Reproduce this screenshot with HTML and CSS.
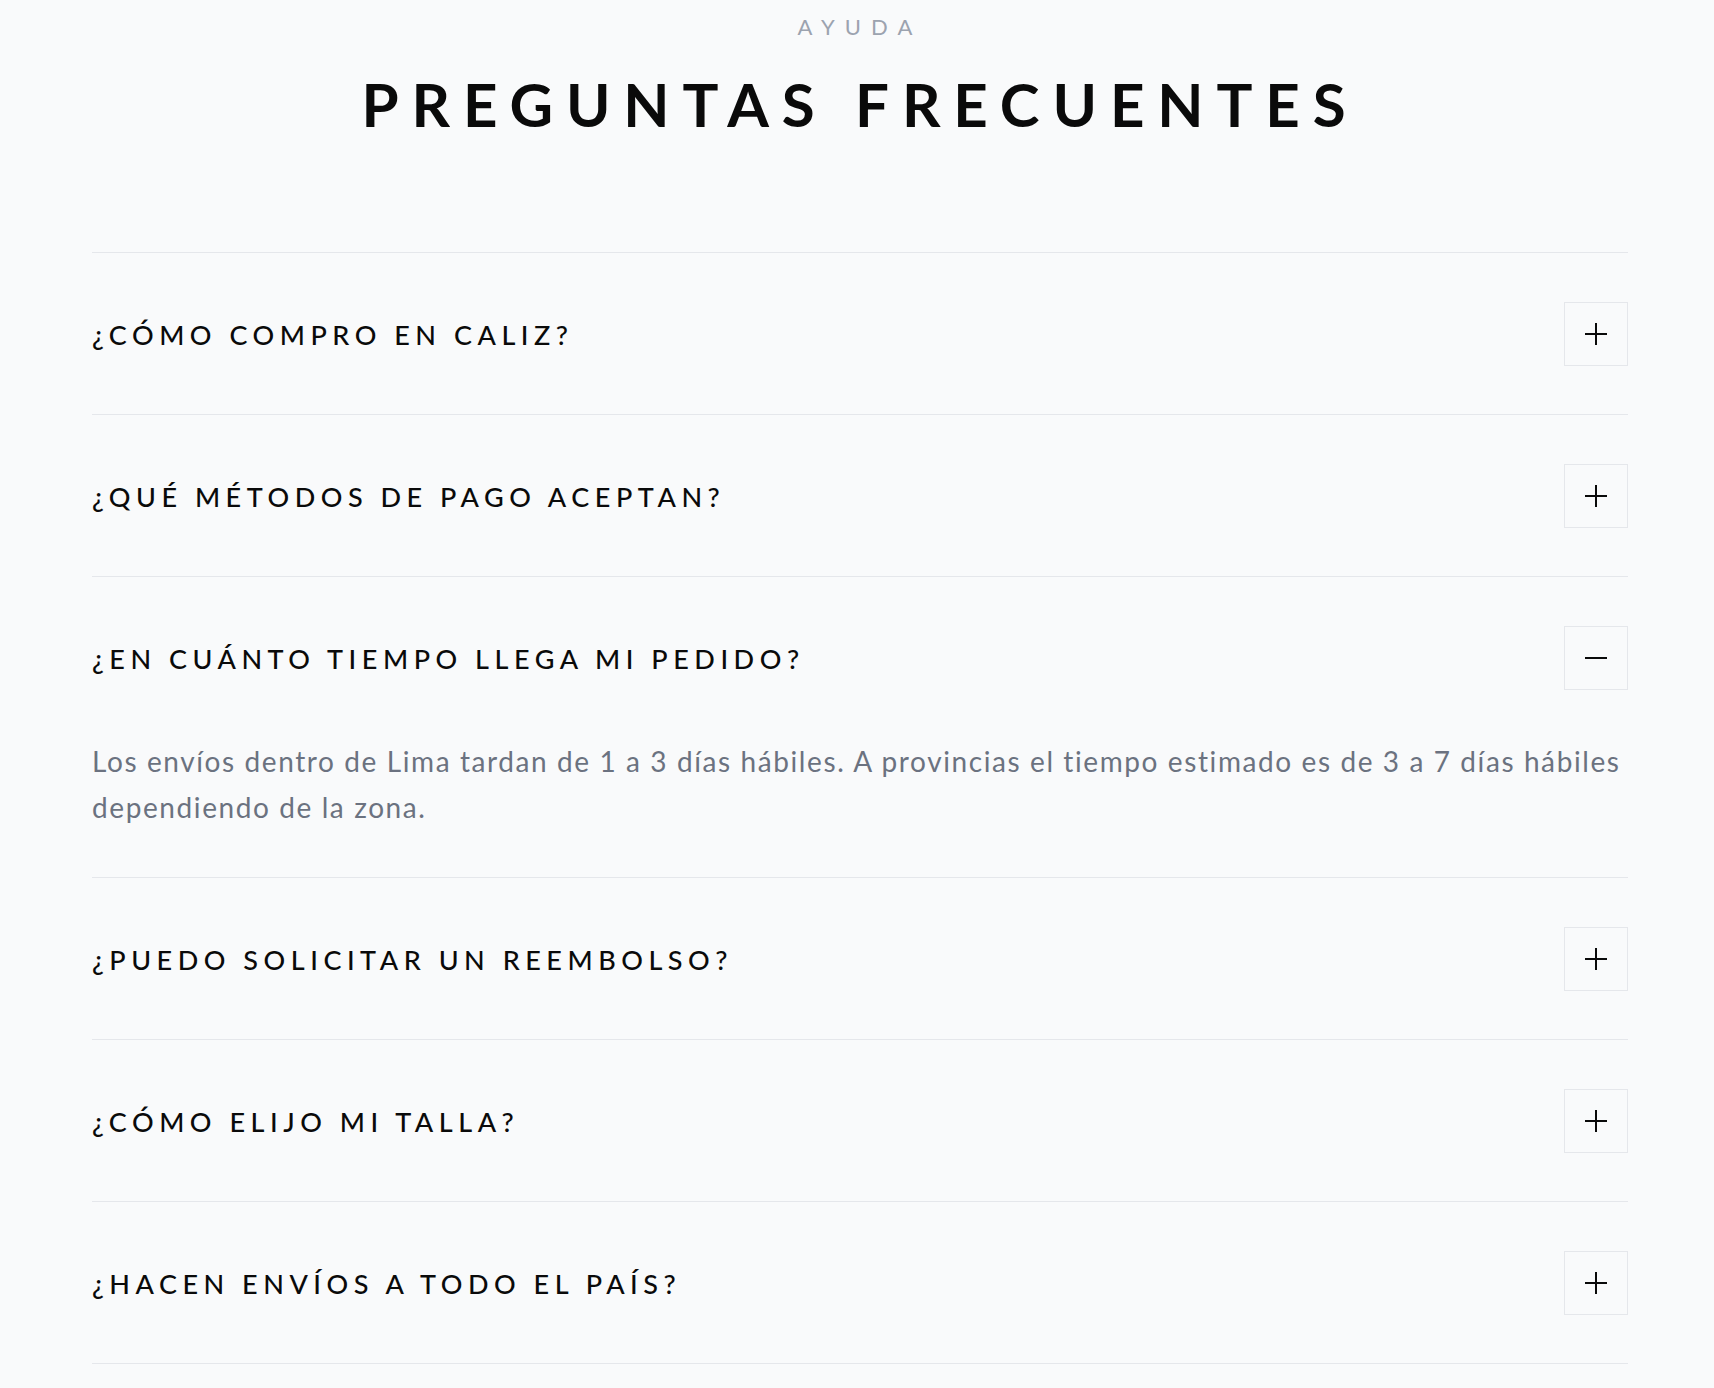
FILE: index.html
```html
<!DOCTYPE html>
<html lang="es">
<head>
    <meta charset="UTF-8">
    <meta name="viewport" content="width=device-width, initial-scale=1.0">
    <title>Preguntas frecuentes | Caliz</title>
    <link rel="stylesheet" href="styles.css">
</head>
<body>
    <section class="faq">
        <header class="faq-head">
            <p class="eyebrow">Ayuda</p>
            <h1>Preguntas frecuentes</h1>
        </header>

        <div class="faq-list">
            <div class="faq-item">
                <button class="faq-question" type="button">
                    <span>¿Cómo compro en Caliz?</span>
                    <span class="toggle"></span>
                </button>
                <p class="faq-answer">Elige tus productos, agrégalos al carrito y completa tus datos de envío y pago. Recibirás un correo con la confirmación de tu pedido.</p>
            </div>
            <div class="faq-item">
                <button class="faq-question" type="button">
                    <span>¿Qué métodos de pago aceptan?</span>
                    <span class="toggle"></span>
                </button>
                <p class="faq-answer">Aceptamos tarjetas de crédito y débito, Yape, Plin y transferencia bancaria.</p>
            </div>
            <div class="faq-item open">
                <button class="faq-question" type="button">
                    <span>¿En cuánto tiempo llega mi pedido?</span>
                    <span class="toggle"></span>
                </button>
                <p class="faq-answer">Los envíos dentro de Lima tardan de 1 a 3 días hábiles. A provincias el tiempo estimado es de 3 a 7 días hábiles dependiendo de la zona.</p>
            </div>
            <div class="faq-item">
                <button class="faq-question" type="button">
                    <span>¿Puedo solicitar un reembolso?</span>
                    <span class="toggle"></span>
                </button>
                <p class="faq-answer">Sí, tienes hasta 30 días desde la entrega para solicitar la devolución de tu compra.</p>
            </div>
            <div class="faq-item">
                <button class="faq-question" type="button">
                    <span>¿Cómo elijo mi talla?</span>
                    <span class="toggle"></span>
                </button>
                <p class="faq-answer">En cada producto encontrarás una guía de tallas con las medidas de cada prenda.</p>
            </div>
            <div class="faq-item">
                <button class="faq-question" type="button">
                    <span>¿Hacen envíos a todo el país?</span>
                    <span class="toggle"></span>
                </button>
                <p class="faq-answer">Sí, realizamos envíos a todas las provincias del Perú.</p>
            </div>
        </div>
    </section>

    <script>
        // Abrir y cerrar cada pregunta
        document.querySelectorAll('.faq-question').forEach(btn => {
            btn.addEventListener('click', function () {
                this.parentElement.classList.toggle('open');
            });
        });
    </script>
</body>
</html>
```

FILE: styles.css
```css
body {
    background-color: #f9fafb;
    color: #0a0a0a;
    font-family: Lato, "Open Sans", sans-serif;
    margin: 0;
    padding: 0 0 0 6px;
}

.faq {
    max-width: 1536px;
    margin: 0 auto;
    padding-top: 12px;
}

.faq-head {
    text-align: center;
}

.eyebrow {
    margin: 0;
    font-size: 22px;
    line-height: 30px;
    letter-spacing: 0.46em;
    text-transform: uppercase;
    color: #9ca3af;
}

h1 {
    margin: 26px 0 0;
    font-size: 60px;
    line-height: 72px;
    font-weight: 700;
    letter-spacing: 0.215em;
    text-transform: uppercase;
}

.faq-list {
    margin-top: 112px;
    border-top: 1px solid #e5e7eb;
}

.faq-item {
    border-bottom: 1px solid #e5e7eb;
}

.faq-question {
    display: flex;
    align-items: center;
    justify-content: space-between;
    width: 100%;
    padding: 49px 0 48px;
    border: none;
    background: none;
    font-family: inherit;
    font-size: 27px;
    font-weight: 500;
    letter-spacing: 0.205em;
    text-transform: uppercase;
    text-align: left;
    color: #0a0a0a;
    cursor: pointer;
}

.toggle {
    position: relative;
    flex-shrink: 0;
    width: 64px;
    height: 64px;
    box-sizing: border-box;
    border: 1px solid #e5e7eb;
}

/* las dos barras del signo + (la vertical se oculta al abrir) */
.toggle::before,
.toggle::after {
    content: "";
    position: absolute;
    left: 50%;
    top: 50%;
    background-color: #0a0a0a;
}

.toggle::before {
    width: 22px;
    height: 2px;
    margin: -1px 0 0 -11px;
}

.toggle::after {
    width: 2px;
    height: 22px;
    margin: -11px 0 0 -1px;
}

.faq-item.open .toggle::after {
    display: none;
}

.faq-answer {
    display: none;
    margin: 0;
    padding: 0 0 47px;
    font-size: 28px;
    line-height: 46px;
    letter-spacing: 0.057em;
    color: #6b7280;
}

.faq-item.open .faq-answer {
    display: block;
}
```
